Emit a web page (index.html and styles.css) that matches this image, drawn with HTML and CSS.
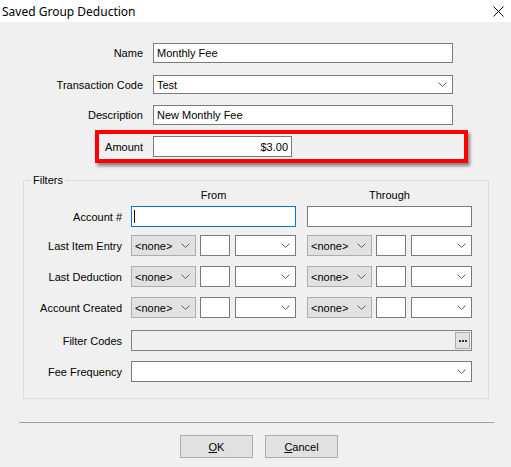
FILE: index.html
```html
<!DOCTYPE html>
<html lang="en">
<head>
    <meta charset="UTF-8">
    <title>Saved Group Deduction</title>
    <link rel="stylesheet" href="styles.css">
</head>
<body>

    <div class="titlebar">
        <span class="title">Saved Group Deduction</span>
        <svg class="close" width="11" height="11" viewBox="0 0 11 11">
            <path d="M0.5 0.5 L10.5 10.5 M10.5 0.5 L0.5 10.5" stroke="#000" stroke-width="1" fill="none"/>
        </svg>
    </div>

    <div class="top">
        <div class="row name-row">
            <label>Name</label>
            <div class="box wide">Monthly Fee</div>
        </div>
        <div class="row code-row">
            <label>Transaction Code</label>
            <div class="box wide combo">
                <span>Test</span>
                <svg class="chev" width="9" height="5" viewBox="0 0 9 5"><polyline points="0.5,0.5 4.5,4.5 8.5,0.5"/></svg>
            </div>
        </div>
        <div class="row desc-row">
            <label>Description</label>
            <div class="box wide">New Monthly Fee</div>
        </div>
        <div class="row amount-row">
            <label>Amount</label>
            <div class="box amount">$3.00</div>
        </div>
    </div>

    <div class="group">
        <span class="group-title">Filters</span>

        <div class="col-heads">
            <span>From</span>
            <span>Through</span>
        </div>

        <div class="frow first">
            <label>Account #</label>
            <div class="box half focused"><span class="caret"></span></div>
            <div class="box half"></div>
        </div>

        <div class="frow second">
            <label>Last Item Entry</label>
            <div class="range">
                <div class="box none combo"><span>&lt;none&gt;</span><svg class="chev" width="9" height="5" viewBox="0 0 9 5"><polyline points="0.5,0.5 4.5,4.5 8.5,0.5"/></svg></div>
                <div class="box num"></div>
                <div class="box date combo"><span></span><svg class="chev" width="9" height="5" viewBox="0 0 9 5"><polyline points="0.5,0.5 4.5,4.5 8.5,0.5"/></svg></div>
            </div>
            <div class="range">
                <div class="box none combo"><span>&lt;none&gt;</span><svg class="chev" width="9" height="5" viewBox="0 0 9 5"><polyline points="0.5,0.5 4.5,4.5 8.5,0.5"/></svg></div>
                <div class="box num"></div>
                <div class="box date combo"><span></span><svg class="chev" width="9" height="5" viewBox="0 0 9 5"><polyline points="0.5,0.5 4.5,4.5 8.5,0.5"/></svg></div>
            </div>
        </div>

        <div class="frow">
            <label>Last Deduction</label>
            <div class="range">
                <div class="box none combo"><span>&lt;none&gt;</span><svg class="chev" width="9" height="5" viewBox="0 0 9 5"><polyline points="0.5,0.5 4.5,4.5 8.5,0.5"/></svg></div>
                <div class="box num"></div>
                <div class="box date combo"><span></span><svg class="chev" width="9" height="5" viewBox="0 0 9 5"><polyline points="0.5,0.5 4.5,4.5 8.5,0.5"/></svg></div>
            </div>
            <div class="range">
                <div class="box none combo"><span>&lt;none&gt;</span><svg class="chev" width="9" height="5" viewBox="0 0 9 5"><polyline points="0.5,0.5 4.5,4.5 8.5,0.5"/></svg></div>
                <div class="box num"></div>
                <div class="box date combo"><span></span><svg class="chev" width="9" height="5" viewBox="0 0 9 5"><polyline points="0.5,0.5 4.5,4.5 8.5,0.5"/></svg></div>
            </div>
        </div>

        <div class="frow">
            <label>Account Created</label>
            <div class="range">
                <div class="box none combo"><span>&lt;none&gt;</span><svg class="chev" width="9" height="5" viewBox="0 0 9 5"><polyline points="0.5,0.5 4.5,4.5 8.5,0.5"/></svg></div>
                <div class="box num"></div>
                <div class="box date combo"><span></span><svg class="chev" width="9" height="5" viewBox="0 0 9 5"><polyline points="0.5,0.5 4.5,4.5 8.5,0.5"/></svg></div>
            </div>
            <div class="range">
                <div class="box none combo"><span>&lt;none&gt;</span><svg class="chev" width="9" height="5" viewBox="0 0 9 5"><polyline points="0.5,0.5 4.5,4.5 8.5,0.5"/></svg></div>
                <div class="box num"></div>
                <div class="box date combo"><span></span><svg class="chev" width="9" height="5" viewBox="0 0 9 5"><polyline points="0.5,0.5 4.5,4.5 8.5,0.5"/></svg></div>
            </div>
        </div>

        <div class="frow codes-row">
            <label>Filter Codes</label>
            <div class="box full readonly">
                <span class="dots">
                    <svg width="8" height="2" viewBox="0 0 8 2"><rect x="0" y="0" width="2" height="2"/><rect x="3" y="0" width="2" height="2"/><rect x="6" y="0" width="2" height="2"/></svg>
                </span>
            </div>
        </div>

        <div class="frow freq-row">
            <label>Fee Frequency</label>
            <div class="box full combo"><span></span><svg class="chev" width="9" height="5" viewBox="0 0 9 5"><polyline points="0.5,0.5 4.5,4.5 8.5,0.5"/></svg></div>
        </div>
    </div>

    <div class="separator"></div>

    <div class="buttons">
        <button><u>O</u>K</button>
        <button><u>C</u>ancel</button>
    </div>

</body>
</html>
```

FILE: styles.css
```css
body { margin: 0; width: 511px; background: #f0f0f0; color: #000;
       font-family: "Liberation Sans", Arial, sans-serif; font-size: 11px; }

/* window caption */
.titlebar { height: 22px; background: #fff; display: flex; align-items: center; justify-content: space-between; }
.title { margin-left: 2px; font-family: "Noto Sans", "Open Sans", sans-serif; font-size: 12px; }
.close { margin-right: 7px; }

/* generic text box / combo box */
.box { box-sizing: border-box; height: 21px; border: 1px solid #7a7a7a; background: #fff;
       padding: 0 3px; display: flex; align-items: center; white-space: nowrap; }
.combo { justify-content: space-between; padding-right: 5px; }
.chev { flex: none; }
.chev polyline { fill: none; stroke: #606060; stroke-width: 1; }

/* upper fields */
.top { padding-top: 21px; }
.row { display: flex; align-items: center; }
.row label { width: 143px; margin-right: 10px; text-align: right; }
.wide { width: 300px; height: 20px; }
.name-row { margin-top: 0; }
.code-row { margin-top: 12px; }
.code-row .box { height: 19px; }
.desc-row { margin-top: 11px; }
.amount-row { margin-top: 11px; position: relative; }
.amount { width: 139px; justify-content: flex-end; }

/* red highlight drawn round the amount field */
.amount-row::after { content: ""; position: absolute; left: 95px; top: -6px; width: 373px; height: 33px;
                     box-sizing: border-box; border: 4px solid #f00;
                     box-shadow: 2px 3px 3px rgba(0, 0, 0, 0.45); }

/* Filters group */
.group { box-sizing: border-box; width: 466px; margin: 23px 0 0 23px; border: 1px solid #dcdcdc;
         padding: 0 15px 16px 0; }
.group-title { display: block; width: max-content; margin: -7px 0 0 7px; padding: 0 2px;
               background: #f0f0f0; line-height: 13px; }
.col-heads { display: flex; gap: 11px; margin-top: 2px; padding-left: 107px; line-height: 13px; }
.col-heads span { width: 165px; text-align: center; }

.frow { display: flex; align-items: center; gap: 11px; margin-top: 10px; }
.frow label { width: 98px; margin-right: -2px; text-align: right; white-space: nowrap; }
.frow.first { margin-top: 4px; }
.frow.second { margin-top: 8px; }
.frow.codes-row { margin-top: 12px; }
.half { width: 165px; }
.focused { border-color: #0078d7; padding-left: 2px; }
.caret { width: 1px; height: 13px; background: #000; }

.range { display: flex; width: 165px; }
.range .none { width: 65px; background: #e1e1e1; border-color: #adadad; }
.range .num { width: 30px; margin-left: 4px; }
.range .date { width: 61px; margin-left: 5px; }

.full { width: 341px; }
.readonly { background: #f0f0f0; justify-content: flex-end; padding: 1px; border-color: #828282; }
.dots { box-sizing: border-box; width: 15px; height: 17px; background: #e1e1e1; border: 1px solid #adadad;
        display: flex; align-items: center; justify-content: center; }
.dots svg { fill: #333; }

/* dialog footer */
.separator { width: 475px; height: 1px; margin: 23px 0 0 19px; background: #a0a0a0; }
.buttons { display: flex; gap: 12px; margin: 12px 0 0 180px; }
.buttons button { width: 73px; height: 23px; background: #e1e1e1; border: 1px solid #adadad; border-radius: 0;
                  font-family: inherit; font-size: 11px; color: #000; padding: 0; }
```
